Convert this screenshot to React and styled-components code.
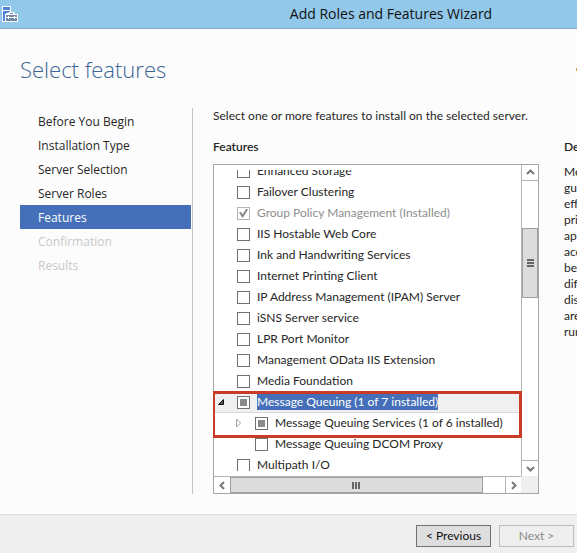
import React from 'react'
import styled, { createGlobalStyle } from 'styled-components'

const GlobalStyle = createGlobalStyle`
  * {
    box-sizing: border-box;
  }

  body {
    margin: 0;
    background: #fcfcfc;
    color: #262626;
    font-family: 'Lato', 'Open Sans', sans-serif;
    font-size: 12px;
    line-height: 16px;
  }
`

const Window = styled.div`
  display: flex;
  flex-direction: column;
  min-height: 100vh;
  overflow: hidden;
`

const TitleBar = styled.header`
  display: flex;
  align-items: center;
  height: 29px;
  padding: 0 2px;
  background: #92c8ea;
  border-bottom: 1px solid #86a6cc;
`

const Caption = styled.div`
  flex: 1;
  padding-left: 189px;
  text-align: center;
  font-family: 'Open Sans', sans-serif;
  font-size: 14px;
  line-height: 28px;
  color: #111;
  white-space: nowrap;
`

const PageHeader = styled.div`
  display: flex;
  align-items: center;
  justify-content: space-between;
  padding: 24px 0 23px 20px;
`

const Heading = styled.h1`
  margin: 0;
  font-family: 'Open Sans', sans-serif;
  font-size: 22px;
  line-height: 32px;
  font-weight: 300;
  color: #3b6595;
`

const Body = styled.div`
  display: flex;
  flex: 1;
  padding-bottom: 20px;
`

const Steps = styled.nav`
  display: flex;
  flex-direction: column;
  flex: 0 0 193px;
  padding: 1px 1px 0 20px;
  border-right: 1px solid #c4c4c4;
  font-family: 'Open Sans', sans-serif;
`

const Step = styled.a`
  padding: 1px 18px 0;
  line-height: 23px;
  text-decoration: none;
  color: ${props => (props.$active ? '#fff' : props.$disabled ? '#c8c8c8' : '#262626')};
  background: ${props => (props.$active ? '#4570b9' : 'transparent')};
`

const Page = styled.main`
  flex: 1;
  min-width: 0;
  padding-left: 20px;
`

const Intro = styled.p`
  margin: 0 0 15px;
  white-space: nowrap;
`

const Columns = styled.div`
  display: flex;
  gap: 25px;
  overflow: hidden;
`

const Column = styled.section`
  flex: 0 0 ${props => props.$width};
`

const ColumnTitle = styled.h2`
  margin: 0 0 9px;
  font-size: 12px;
  line-height: 16px;
  font-weight: 600;
`

const Description = styled.p`
  margin: 0;
  white-space: pre;
`

const ListBox = styled.div`
  position: relative;
  display: grid;
  grid-template-columns: 1fr 17px;
  grid-template-rows: 311px 17px;
  background: #fff;
  border: 1px solid #a5a5a5;
`

const Viewport = styled.div`
  margin: 5px 0;
  overflow: hidden;
`

const Tree = styled.ul`
  margin: -9px 0 0;
  padding: 0;
  list-style: none;
`

const TreeRow = styled.li`
  display: flex;
  align-items: center;
  height: 21px;
  padding-left: ${props => props.$level * 18 + 3}px;
  background: ${props => (props.$selected ? '#f0f0f0' : 'transparent')};
  border-bottom: 1px solid ${props => (props.$selected ? '#d9d9d9' : 'transparent')};
`

const Toggle = styled.button`
  display: flex;
  flex: 0 0 20px;
  padding: 0;
  border: 0;
  background: none;
`

const Feature = styled.label`
  display: flex;
  align-items: center;
  gap: 7px;
  white-space: nowrap;
  color: ${props => (props.$disabled ? '#8e8e8e' : '#262626')};
`

const Check = styled.input`
  appearance: none;
  display: grid;
  place-content: center;
  width: 13px;
  height: 13px;
  margin: 0;
  border: 1px solid #707070;
  background: #fff;

  &:indeterminate::before {
    content: '';
    width: 7px;
    height: 7px;
    background: #8a8a8a;
  }

  &:disabled {
    border-color: #b5b5b5;
  }

  &:disabled:checked::before {
    content: '';
    width: 9px;
    height: 9px;
    background: #8a8a8a;
    clip-path: polygon(0 45%, 20% 35%, 40% 65%, 82% 0, 100% 10%, 45% 100%, 35% 100%);
  }
`

const FeatureName = styled.span`
  color: ${props => (props.$selected ? '#fff' : 'inherit')};
  background: ${props => (props.$selected ? '#4570b9' : 'transparent')};
`

const Callout = styled.div`
  position: absolute;
  top: 226px;
  left: -2px;
  right: 16px;
  height: 47px;
  border: 3px solid #c93a27;
  pointer-events: none;
`

const ScrollBar = styled.div`
  display: flex;
  flex-direction: ${props => (props.$vertical ? 'column' : 'row')};
  min-width: 0;
  border: 0 solid #b4b4b4;
  border-width: ${props => (props.$vertical ? '0 0 0 1px' : '1px 0 0')};
`

const Arrow = styled.button`
  display: grid;
  place-items: center;
  flex: 0 0 16px;
  padding: 0;
  border: 0 solid #b4b4b4;
  border-width: ${props => props.$edge};
  background: #fff;
`

const Track = styled.div`
  flex: ${props => props.$size};
`

const Thumb = styled.div`
  display: grid;
  place-items: center;
  flex: ${props => props.$size};
  background: #dcdcdc;
  border: 1px solid #a0a0a0;
`

const Corner = styled.div`
  background: #efefef;
`

const Footer = styled.footer`
  display: flex;
  justify-content: flex-end;
  gap: 8px;
  padding: 10px 3px 6px;
  background: #efefef;
  border-top: 1px solid #dadada;
`

const Button = styled.button`
  width: 75px;
  height: 22px;
  padding: 0;
  font: inherit;
  color: #111;
  background: #dedede;
  border: 1px solid #707070;

  &:disabled {
    color: #8a8a8a;
    background: #efefef;
    border-color: #bcbcbc;
  }
`

const steps = [
  { label: 'Before You Begin' },
  { label: 'Installation Type' },
  { label: 'Server Selection' },
  { label: 'Server Roles' },
  { label: 'Features', active: true },
  { label: 'Confirmation', disabled: true },
  { label: 'Results', disabled: true }
]

const features = [
  { name: 'Enhanced Storage' },
  { name: 'Failover Clustering' },
  { name: 'Group Policy Management (Installed)', installed: true },
  { name: 'IIS Hostable Web Core' },
  { name: 'Ink and Handwriting Services' },
  { name: 'Internet Printing Client' },
  { name: 'IP Address Management (IPAM) Server' },
  { name: 'iSNS Server service' },
  { name: 'LPR Port Monitor' },
  { name: 'Management OData IIS Extension' },
  { name: 'Media Foundation' },
  { name: 'Message Queuing (1 of 7 installed)', partial: true, toggle: 'open', selected: true },
  { name: 'Message Queuing Services (1 of 6 installed)', partial: true, toggle: 'closed', level: 1 },
  { name: 'Message Queuing DCOM Proxy', level: 1 },
  { name: 'Multipath I/O' }
]

const description = [
  'Message Queuing provides',
  'guaranteed message delivery,',
  'efficient routing, security, and',
  'priority-based messaging between',
  'applications. Message Queuing also',
  'accommodates message delivery',
  'between applications that run on',
  'different operating systems, use',
  'dissimilar network infrastructures,',
  'are temporarily offline, or that are',
  'running at different times.'
]

const arrows = {
  up: 'M1 6 L4.5 2.5 L8 6',
  down: 'M1 3 L4.5 6.5 L8 3',
  left: 'M6 1 L2.5 4.5 L6 8',
  right: 'M3 1 L6.5 4.5 L3 8'
}

const ServerIcon = () => (
  <svg width="16" height="16" viewBox="0 0 16 16">
    <path d="M0 0h9v8H4v8H0z" fill="#fff" />
    <path d="M1 1h7v3H1zM1 5h7v2H4v8H1z" fill="#4f86dc" />
    <path d="M3 8h3l1-2h5l1 2h3v8H3z" fill="#fff" />
    <path d="M4 9h11v2H4zM4 12h11v3H4zM8 7h3v1H8z" fill="#7388a6" />
    <path d="M6 10h1v3H6zM12 10h1v3h-1z" fill="#fff" />
  </svg>
)

const FlagIcon = () => (
  <svg width="1" height="3" viewBox="0 0 1 3">
    <path d="M0 0h1v3H0z" fill="#cda04a" />
  </svg>
)

const ArrowIcon = ({ direction }) => (
  <svg width="9" height="9" viewBox="0 0 9 9" fill="none" stroke="#777" strokeWidth="2">
    <path d={arrows[direction]} />
  </svg>
)

const Grip = ({ vertical }) => (
  <svg width="9" height="9" viewBox="0 0 9 9" stroke="#666" strokeWidth="2">
    <path d={vertical ? 'M1 1h7M1 4h7M1 7h7' : 'M1 1v7M4 1v7M7 1v7'} />
  </svg>
)

const ToggleIcon = ({ open }) => (
  <svg width="9" height="10" viewBox="0 0 9 10">
    {open ? (
      <path d="M6.500 2.500v5h-5z" fill="#555" stroke="#111" />
    ) : (
      <path d="M1.500 1v8l4-4z" fill="#fff" stroke="#a0a0a0" />
    )}
  </svg>
)

const FeatureRow = ({ feature }) => {
  const { name, level = 0, toggle, selected, partial, installed } = feature
  const markPartial = el => {
    if (el) el.indeterminate = !!partial
  }

  return (
    <TreeRow $level={level} $selected={selected}>
      <Toggle aria-label={toggle ? 'Expand ' + name : undefined} disabled={!toggle}>
        {toggle && <ToggleIcon open={toggle === 'open'} />}
      </Toggle>
      <Feature $disabled={installed}>
        <Check type="checkbox" ref={markPartial} defaultChecked={installed} disabled={installed} />
        <FeatureName $selected={selected}>{name}</FeatureName>
      </Feature>
    </TreeRow>
  )
}

const App = () => {
  return (
    <Window>
      <GlobalStyle />
      <TitleBar>
        <ServerIcon />
        <Caption>Add Roles and Features Wizard</Caption>
      </TitleBar>
      <PageHeader>
        <Heading>Select features</Heading>
        <FlagIcon />
      </PageHeader>
      <Body>
        <Steps>
          {steps.map(step => (
            <Step key={step.label} href="#" $active={step.active} $disabled={step.disabled}>
              {step.label}
            </Step>
          ))}
        </Steps>
        <Page>
          <Intro>Select one or more features to install on the selected server.</Intro>
          <Columns>
            <Column $width="326px">
              <ColumnTitle>Features</ColumnTitle>
              <ListBox>
                <Viewport>
                  <Tree>
                    {features.map(feature => (
                      <FeatureRow key={feature.name} feature={feature} />
                    ))}
                  </Tree>
                </Viewport>
                <ScrollBar $vertical>
                  <Arrow aria-label="Scroll up" $edge="0 0 1px">
                    <ArrowIcon direction="up" />
                  </Arrow>
                  <Track $size={47} />
                  <Thumb $size={68}>
                    <Grip vertical />
                  </Thumb>
                  <Track $size={162} />
                  <Arrow aria-label="Scroll down" $edge="1px 0 0">
                    <ArrowIcon direction="down" />
                  </Arrow>
                </ScrollBar>
                <ScrollBar>
                  <Arrow aria-label="Scroll left" $edge="0">
                    <ArrowIcon direction="left" />
                  </Arrow>
                  <Thumb $size={251}>
                    <Grip />
                  </Thumb>
                  <Track $size={22} />
                  <Arrow aria-label="Scroll right" $edge="0 0 0 1px">
                    <ArrowIcon direction="right" />
                  </Arrow>
                </ScrollBar>
                <Corner />
                <Callout />
              </ListBox>
            </Column>
            <Column $width="210px">
              <ColumnTitle>Description</ColumnTitle>
              <Description>{description.join('\n')}</Description>
            </Column>
          </Columns>
        </Page>
      </Body>
      <Footer>
        <Button>&lt; Previous</Button>
        <Button disabled>Next &gt;</Button>
      </Footer>
    </Window>
  )
}

export default App
